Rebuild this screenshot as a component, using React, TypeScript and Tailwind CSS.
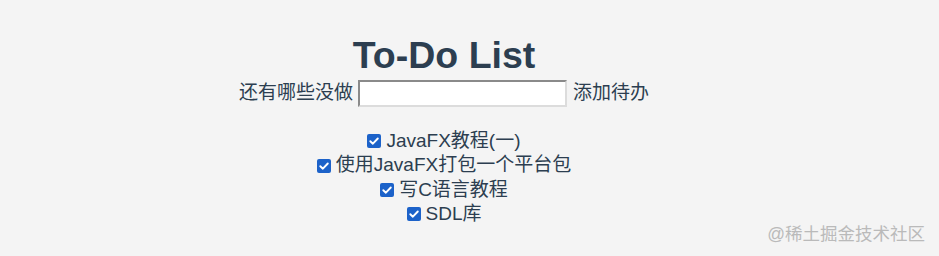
import { useState } from "react";

const FONT = { fontFamily: '"Liberation Sans", Arial, "Noto Sans CJK SC", sans-serif' };

const INITIAL_TODOS = [
  { id: 1, text: "JavaFX教程(一)", done: true },
  { id: 2, text: "使用JavaFX打包一个平台包", done: true },
  { id: 3, text: "写C语言教程", done: true },
  { id: 4, text: "SDL库", done: true },
];

function CheckBox({ checked, onChange }: { checked: boolean; onChange: () => void }) {
  return (
    <button
      type="button"
      onClick={onChange}
      className={
        "flex h-[14px] w-[14px] items-center justify-center rounded-[2px] " +
        (checked ? "bg-[#1c62c9]" : "border border-[#767676] bg-white")
      }
    >
      {checked ? (
        <svg viewBox="0 0 14 14" className="h-[14px] w-[14px]">
          <path d="M3.3 7.2 L5.9 9.7 L10.8 4.5" fill="none" stroke="white" strokeWidth="1.9" strokeLinecap="round" strokeLinejoin="round" />
        </svg>
      ) : null}
    </button>
  );
}

export default function App() {
  const [todos, setTodos] = useState(INITIAL_TODOS);
  const [draft, setDraft] = useState("");

  const toggle = (id: number) =>
    setTodos((list) => list.map((t) => (t.id === id ? { ...t, done: !t.done } : t)));

  return (
    <div className="relative h-[256px] w-full overflow-hidden bg-[#f4f4f4] text-[#2c3e50]" style={FONT}>
      <div className="flex flex-col items-center pr-[51px]">
        <h1 className="mt-[34px] text-[37.5px] font-bold leading-[42px]">To-Do List</h1>

        <div className="mt-[2px] flex h-[31px] items-center gap-[5px] text-[19px]">
          <span>还有哪些没做</span>
          <input
            value={draft}
            onChange={(e) => setDraft(e.target.value)}
            className="h-[27px] w-[209px] border-2 border-t-[#8a8a8a] border-l-[#8a8a8a] border-r-[#dcdcdc] border-b-[#dcdcdc] bg-white px-1 outline-none"
          />
          <span className="ml-px">添加待办</span>
        </div>

        <ul className="mt-[20px] flex flex-col items-center text-[19px]">
          {todos.map((t) => (
            <li key={t.id} className="flex h-[24.4px] items-center gap-[5px]">
              <CheckBox checked={t.done} onChange={() => toggle(t.id)} />
              <span>{t.text}</span>
            </li>
          ))}
        </ul>
      </div>

      <div className="absolute bottom-[9px] right-[14px] text-[17.5px] text-[#bababa]">@稀土掘金技术社区</div>
    </div>
  );
}
